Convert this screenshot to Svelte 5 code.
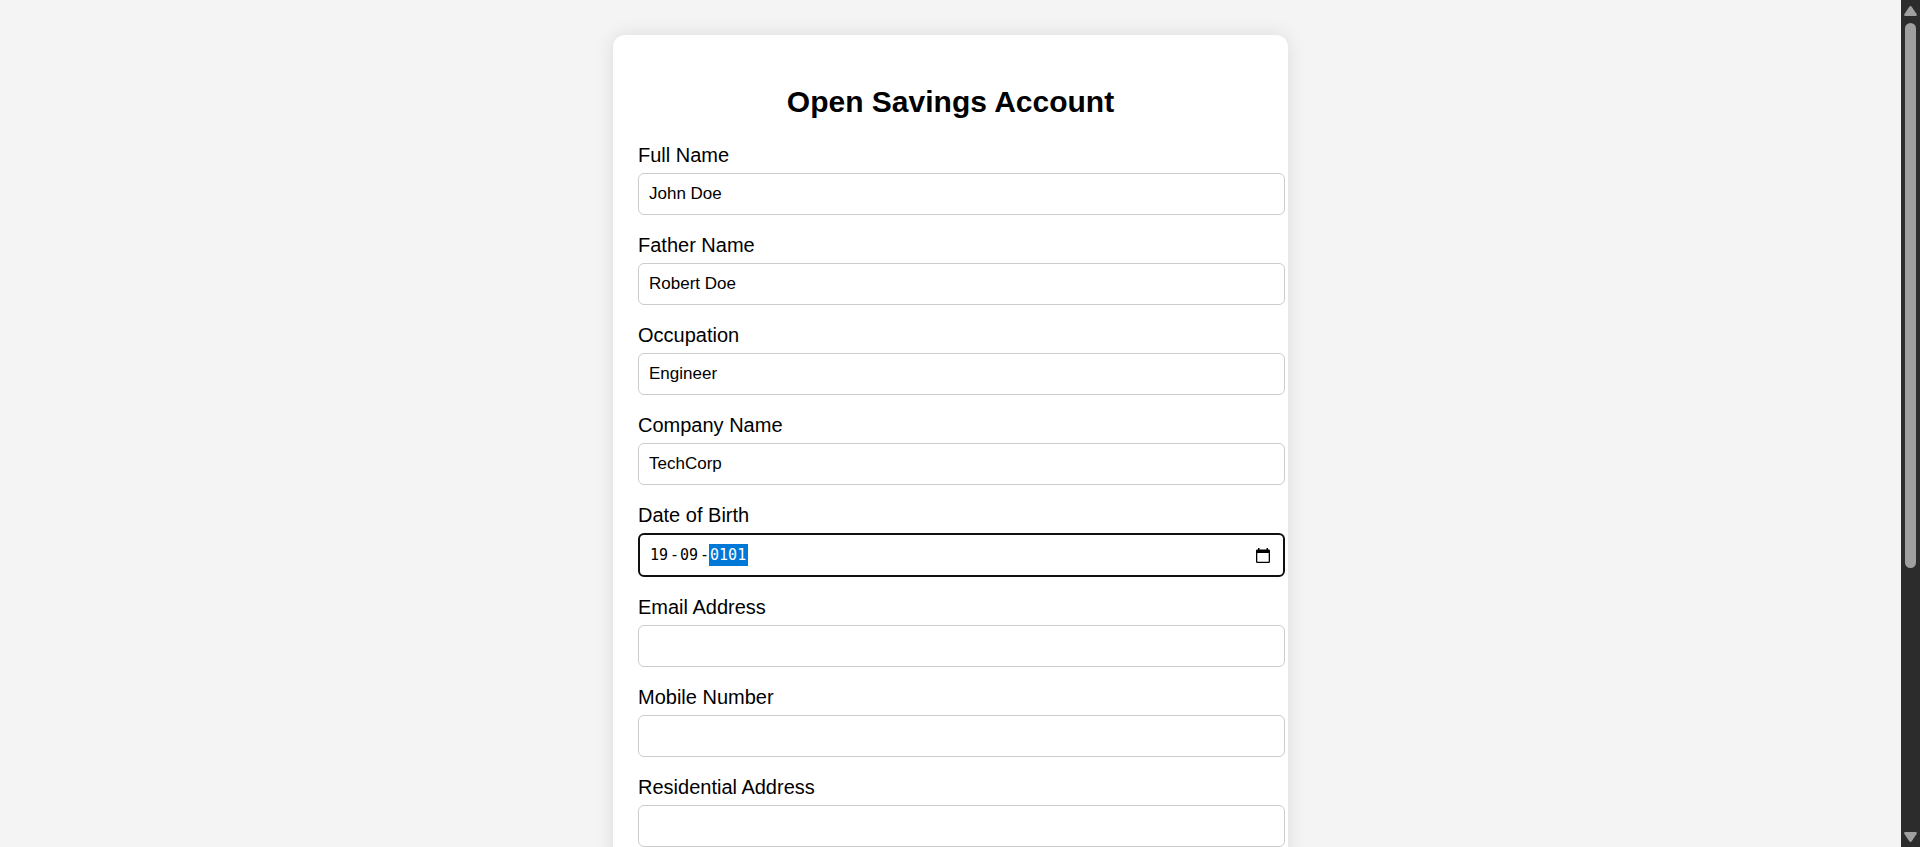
<script>
  const before = [
    { id: 'full-name', label: 'Full Name', value: 'John Doe' },
    { id: 'father-name', label: 'Father Name', value: 'Robert Doe' },
    { id: 'occupation', label: 'Occupation', value: 'Engineer' },
    { id: 'company', label: 'Company Name', value: 'TechCorp' }
  ];
  const after = [
    { id: 'email', label: 'Email Address', type: 'email', value: '' },
    { id: 'mobile', label: 'Mobile Number', type: 'tel', value: '' },
    { id: 'address', label: 'Residential Address', value: '' }
  ];
</script>

{#snippet textField(field)}
  <div class="field">
    <label for={field.id}>{field.label}</label>
    <input class="box" id={field.id} type={field.type ?? 'text'} value={field.value} />
  </div>
{/snippet}

<div class="page">
  <main>
    <form class="card">
      <h2>Open Savings Account</h2>
      {#each before as field (field.id)}
        {@render textField(field)}
      {/each}

      <div class="field">
        <label for="dob-day">Date of Birth</label>
        <div class="box date">
          <input class="part" id="dob-day" aria-label="Day" inputmode="numeric" maxlength="2" value="19" />
          <span>-</span>
          <input class="part" aria-label="Month" inputmode="numeric" maxlength="2" value="09" />
          <span>-</span>
          <input class="part year" aria-label="Year" inputmode="numeric" maxlength="4" value="0101" />
          <button type="button" class="picker" aria-label="Show date picker">
            <svg viewBox="0 0 14 15" width="14" height="15">
              <path d="M2 0h1.500v1.500h7V0H12v1.500h.7A1.300 1.300 0 0 1 14 2.800v10.900a1.300 1.300 0 0 1-1.300 1.300H1.300A1.300 1.300 0 0 1 0 13.700V2.800A1.300 1.300 0 0 1 1.300 1.500H2zM1.300 5v8.700h11.400V5z" fill-rule="evenodd" />
            </svg>
          </button>
        </div>
      </div>

      {#each after as field (field.id)}
        {@render textField(field)}
      {/each}
    </form>
  </main>

  <div class="scrollbar">
    <button type="button" aria-label="Scroll up">
      <svg viewBox="0 0 13 10" width="13" height="10"><path d="M6.500 0q.7 0 1.200.7L12.700 8.300q.6 1.700-1 1.700H1.300q-1.600 0-1-1.700L5.300.7Q5.800 0 6.500 0z" /></svg>
    </button>
    <div class="track"><div class="thumb"></div></div>
    <button type="button" class="down" aria-label="Scroll down">
      <svg viewBox="0 0 13 10" width="13" height="10"><path d="M6.500 10q.7 0 1.200-.7L12.700 1.700q.6-1.700-1-1.700H1.300q-1.600 0-1 1.700L5.300 9.300Q5.800 10 6.500 10z" /></svg>
    </button>
  </div>
</div>

<style>
  :global(body) {
    margin: 0;
    background: #f4f4f4;
  }

  .page {
    display: flex;
    height: 100vh;
    overflow: hidden;
    font-family: "Liberation Sans", Arial, sans-serif;
    font-size: 20px;
    color: #000;
  }

  main {
    flex: 1;
    min-width: 0;
    overflow: hidden;
  }

  .card {
    max-width: 625px;
    margin: 35px auto;
    padding: 25px;
    background: #fff;
    border-radius: 12px;
    box-shadow: 0 0 19px rgba(0, 0, 0, 0.1);
  }

  h2 {
    margin: 25px 0;
    font-size: 30px;
    line-height: 34px;
    text-align: center;
  }

  .field {
    margin-bottom: 19px;
  }

  label {
    display: block;
    margin-bottom: 6px;
    line-height: 23px;
  }

  .box {
    display: block;
    width: 100%;
    height: 20px;
    padding: 10px;
    border: 1px solid #ccc;
    border-radius: 6px;
    background: #fff;
    color: #000;
    font-family: inherit;
    font-size: 17px;
    line-height: 20px;
    outline: none;
  }

  .date {
    display: flex;
    align-items: center;
    padding: 10px 9px;
    border: 2px solid #101010;
    font-family: "DejaVu Sans Mono", Consolas, monospace;
    font-size: 15px;
  }

  .part {
    box-sizing: content-box;
    width: 19px;
    height: 22px;
    padding: 0 1px;
    border: 0;
    background: transparent;
    color: inherit;
    font: inherit;
    outline: none;
  }

  .year {
    width: 37px;
    background: #0078d7;
    color: #fff;
  }

  button {
    padding: 0;
    border: 0;
    background: none;
  }

  .picker {
    display: flex;
    margin-left: auto;
    padding: 0 4px;
  }

  .scrollbar {
    display: flex;
    flex-direction: column;
    width: 19px;
    background: #2c2c2c;
  }

  .scrollbar button {
    display: flex;
    justify-content: center;
    align-items: flex-end;
    height: 16px;
    fill: #9f9f9f;
  }

  .scrollbar .down {
    align-items: flex-start;
    height: 15px;
  }

  .track {
    flex: 1;
    padding: 7px 4px;
  }

  .thumb {
    height: 68%;
    border-radius: 6px;
    background: #9f9f9f;
  }
</style>
